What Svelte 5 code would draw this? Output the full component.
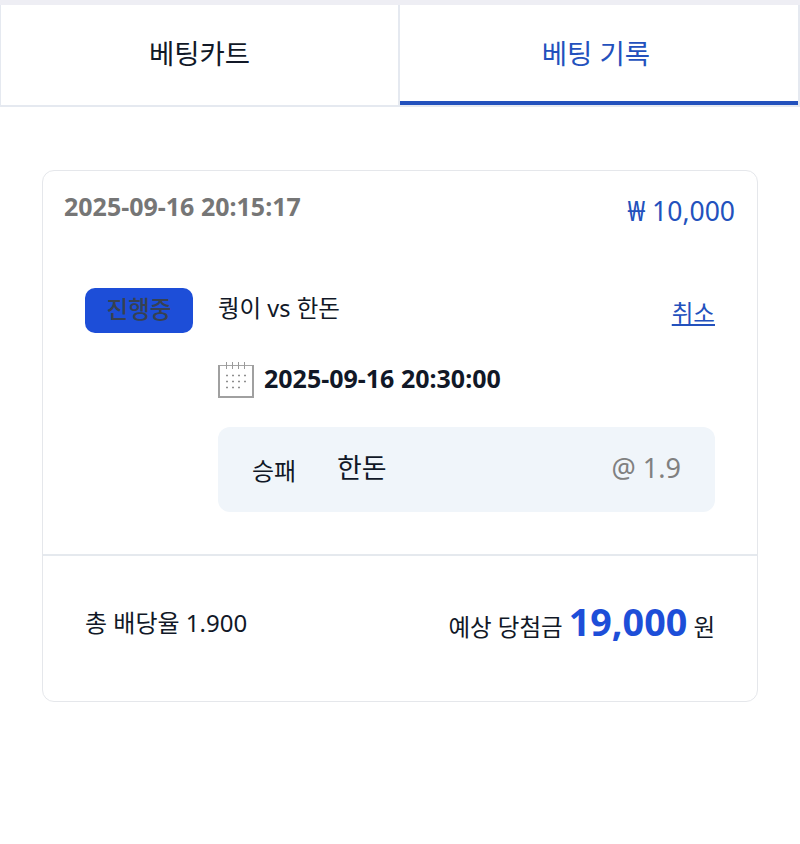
<script>
  let tabs = ['베팅카트', '베팅 기록'];
  let active = 1;
</script>

<div class="page">
  <div class="tabs">
    {#each tabs as tab, i}
      <button class="tab" class:active={i === active} on:click={() => (active = i)}>{tab}</button>
    {/each}
  </div>

  <div class="card">
    <div class="card-top">
      <div class="head">
        <span class="time">2025-09-16 20:15:17</span>
        <span class="stake">₩ 10,000</span>
      </div>

      <div class="match">
        <span class="badge">진행중</span>
        <div class="detail">
          <div class="teams">
            <span>퀑이 vs 한돈</span>
            <a href="#cancel" class="cancel">취소</a>
          </div>
          <div class="start">
            <svg width="36" height="36" viewBox="0 0 36 36" fill="none">
              <path d="M2 3.500H34" stroke="#a5a5a5" stroke-width="1" />
              <path d="M1 3V35H35V3" stroke="#a0a0a0" stroke-width="2" />
              <path d="M8.500 0V7M14.500 0V7M20.500 0V7M26.500 0V7" stroke="#9a9a9a" stroke-width="1" />
              <path d="M8 13.500h2M14 13.500h2M20 13.500h2M26 13.500h2M8 19.500h2M14 19.500h2M20 19.500h2M26 19.500h2M8 25.500h2M14 25.500h2M20 25.500h2" stroke="#8f8f8f" stroke-width="1.500" />
            </svg>
            <strong>2025-09-16 20:30:00</strong>
          </div>
          <div class="pick">
            <span class="market">승패</span>
            <span class="choice">한돈</span>
            <span class="odds">@ 1.9</span>
          </div>
        </div>
      </div>
    </div>

    <div class="card-bottom">
      <span class="rate">총 배당율 1.900</span>
      <span class="win">예상 당첨금 <b>19,000</b> 원</span>
    </div>
  </div>
</div>

<style>
  :global(body) {
    background: #fff;
    font-family: "Noto Sans", "Noto Sans CJK KR", sans-serif;
    color: #111827;
  }

  .page {
    border-top: 5px solid #eeeef4;
  }

  .tabs {
    display: flex;
    height: 102px;
    box-sizing: border-box;
    border: 2px solid #e5e9f0;
    border-top: none;
    border-left-width: 1px;
  }

  .tab {
    flex: 1;
    background: #fff;
    border: none;
    font: inherit;
    font-size: 27.500px;
    color: #111827;
    padding: 0 0 6px;
  }

  .tab:first-child {
    flex: 0 0 399px;
    border-right: 2px solid #e5e9f0;
  }

  .tab.active {
    color: #2351bd;
    border-bottom: 4px solid #2351bd;
    padding: 0 6px 2px 0;
  }

  .card {
    margin: 63px 42px 0;
    height: 532px;
    box-sizing: border-box;
    border: 1px solid #e5e7eb;
    border-radius: 12px;
    display: flex;
    flex-direction: column;
  }

  .card-top {
    height: 385px;
    box-sizing: border-box;
    padding: 18px 22px 0 21px;
    border-bottom: 2px solid #e5e9ee;
  }

  .head {
    display: flex;
    justify-content: space-between;
    align-items: flex-start;
  }

  .time {
    font-size: 25px;
    font-weight: 700;
    color: #767676;
    line-height: 34px;
  }

  .stake {
    font-size: 26.500px;
    color: #2351bd;
    line-height: 40px;
    margin-top: 2px;
  }

  .match {
    display: flex;
    margin: 57px 20px 0 21px;
  }

  .badge {
    width: 108px;
    height: 45px;
    flex: none;
    border-radius: 10px;
    background: #1d4ed8;
    color: #374151;
    font-size: 23.500px;
    font-weight: 500;
    text-align: center;
    line-height: 42px;
    margin-right: 25px;
  }

  .detail {
    flex: 1;
  }

  .teams {
    display: flex;
    justify-content: space-between;
    font-size: 23.500px;
    line-height: 40px;
  }

  .cancel {
    color: #2351bd;
    margin-top: 5px;
  }

  .start {
    display: flex;
    align-items: center;
    gap: 10px;
    margin-top: 25px;
  }

  .start svg {
    margin-top: 4px;
  }

  .start strong {
    font-size: 25px;
    font-weight: 700;
  }

  .pick {
    display: flex;
    align-items: center;
    height: 85px;
    margin-top: 29px;
    padding: 0 34px;
    background: #f0f5fa;
    border-radius: 12px;
  }

  .market {
    font-size: 24px;
    width: 85px;
  }

  .choice {
    font-size: 27px;
    margin-top: -6px;
  }

  .odds {
    margin-left: auto;
    font-size: 27px;
    color: #808080;
    margin-top: -4px;
  }

  .card-bottom {
    flex: 1;
    display: flex;
    justify-content: space-between;
    align-items: center;
    padding: 0 42px 14px 42px;
    font-size: 24px;
  }

  .win {
    font-size: 23.500px;
  }

  .win b {
    font-size: 37.700px;
    color: #1d4ed8;
  }
</style>
